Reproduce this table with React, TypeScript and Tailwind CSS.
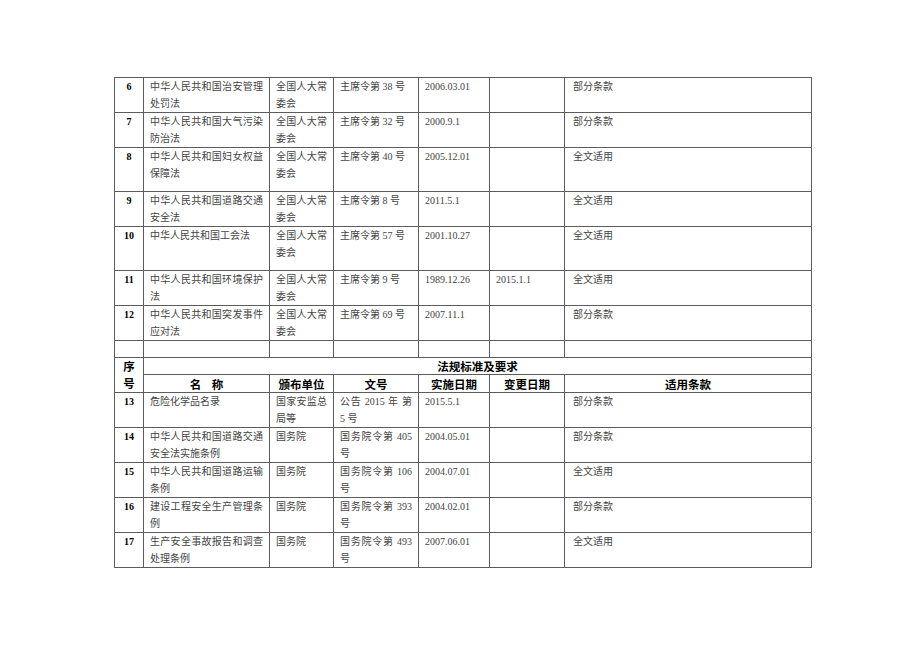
const body = '"Liberation Serif", "Noto Sans CJK SC", serif';
const head = '"Noto Sans CJK SC", "Liberation Sans", sans-serif';

type Row = {
  no: string;
  name: string[];
  issuer: string[];
  doc: string[];
  start: string;
  change: string;
  scope: string;
  h: string;
};

const partA: Row[] = [
  { no: "6", name: ["中华人民共和国治安管理", "处罚法"], issuer: ["全国人大常", "委会"], doc: ["主席令第 38 号"], start: "2006.03.01", change: "", scope: "部分条款", h: "h-[35px]" },
  { no: "7", name: ["中华人民共和国大气污染", "防治法"], issuer: ["全国人大常", "委会"], doc: ["主席令第 32 号"], start: "2000.9.1", change: "", scope: "部分条款", h: "h-[35px]" },
  { no: "8", name: ["中华人民共和国妇女权益", "保障法"], issuer: ["全国人大常", "委会"], doc: ["主席令第 40 号"], start: "2005.12.01", change: "", scope: "全文适用", h: "h-[44px]" },
  { no: "9", name: ["中华人民共和国道路交通", "安全法"], issuer: ["全国人大常", "委会"], doc: ["主席令第 8 号"], start: "2011.5.1", change: "", scope: "全文适用", h: "h-[35px]" },
  { no: "10", name: ["中华人民共和国工会法"], issuer: ["全国人大常", "委会"], doc: ["主席令第 57 号"], start: "2001.10.27", change: "", scope: "全文适用", h: "h-[44px]" },
  { no: "11", name: ["中华人民共和国环境保护", "法"], issuer: ["全国人大常", "委会"], doc: ["主席令第 9 号"], start: "1989.12.26", change: "2015.1.1", scope: "全文适用", h: "h-[35px]" },
  { no: "12", name: ["中华人民共和国突发事件", "应对法"], issuer: ["全国人大常", "委会"], doc: ["主席令第 69 号"], start: "2007.11.1", change: "", scope: "部分条款", h: "h-[35px]" },
];

const partB: Row[] = [
  { no: "13", name: ["危险化学品名录"], issuer: ["国家安监总", "局等"], doc: ["公告 2015 年 第", "5 号"], start: "2015.5.1", change: "", scope: "部分条款", h: "h-[35px]" },
  { no: "14", name: ["中华人民共和国道路交通", "安全法实施条例"], issuer: ["国务院"], doc: ["国务院令第 405", "号"], start: "2004.05.01", change: "", scope: "部分条款", h: "h-[35px]" },
  { no: "15", name: ["中华人民共和国道路运输", "条例"], issuer: ["国务院"], doc: ["国务院令第 106", "号"], start: "2004.07.01", change: "", scope: "全文适用", h: "h-[35px]" },
  { no: "16", name: ["建设工程安全生产管理条", "例"], issuer: ["国务院"], doc: ["国务院令第 393", "号"], start: "2004.02.01", change: "", scope: "部分条款", h: "h-[34px]" },
  { no: "17", name: ["生产安全事故报告和调查", "处理条例"], issuer: ["国务院"], doc: ["国务院令第 493", "号"], start: "2007.06.01", change: "", scope: "全文适用", h: "h-[35px]" },
];

const cell = "border border-[#5c5c5c] align-top px-[6px] p-0 text-left";

function Lines({ lines }: { lines: string[] }) {
  return (
    <>
      {lines.map((l, i) => (
        <div
          key={i}
          className={
            i < lines.length - 1
              ? "whitespace-nowrap text-justify [text-align-last:justify]"
              : "whitespace-nowrap"
          }
        >
          {l}
        </div>
      ))}
    </>
  );
}

function DataRow({ r }: { r: Row }) {
  return (
    <tr className={r.h}>
      <td className="border border-[#5c5c5c] align-top p-0 text-center font-bold text-black">{r.no}</td>
      <td className={cell}><Lines lines={r.name} /></td>
      <td className={cell}><Lines lines={r.issuer} /></td>
      <td className={cell}><Lines lines={r.doc} /></td>
      <td className={cell}>{r.start}</td>
      <td className={cell}>{r.change}</td>
      <td className={cell + " pl-[8px]"}>{r.scope}</td>
    </tr>
  );
}

export default function App() {
  const th = "border border-[#5c5c5c] p-0 text-center font-bold text-black";
  return (
    <div className="min-h-[651px] w-[920px] bg-white pl-[114px] pt-[77px]">
      <table
        className="w-[697px] table-fixed border-collapse text-[10px] leading-[17px] text-[#444]"
        style={{ fontFamily: body }}
      >
        <colgroup>
          <col className="w-[29px]" />
          <col className="w-[126px]" />
          <col className="w-[64px]" />
          <col className="w-[85px]" />
          <col className="w-[71px]" />
          <col className="w-[75px]" />
          <col className="w-[247px]" />
        </colgroup>
        <tbody>
          {partA.map((r) => (
            <DataRow key={r.no} r={r} />
          ))}
          <tr className="h-[17px]">
            {[0, 1, 2, 3, 4, 5, 6].map((i) => (
              <td key={i} className="border border-[#5c5c5c] p-0" />
            ))}
          </tr>
          <tr className="h-[17px] text-[11.5px] leading-[16px]" style={{ fontFamily: head }}>
            <td rowSpan={2} className={th + " leading-[17px]"}>
              <div>序</div>
              <div>号</div>
            </td>
            <td colSpan={6} className={th}>法规标准及要求</td>
          </tr>
          <tr className="h-[18px] text-[11.5px] leading-[16px]" style={{ fontFamily: head }}>
            <td className={th + " whitespace-pre"}>名    称</td>
            <td className={th}>颁布单位</td>
            <td className={th}>文号</td>
            <td className={th}>实施日期</td>
            <td className={th}>变更日期</td>
            <td className={th}>适用条款</td>
          </tr>
          {partB.map((r) => (
            <DataRow key={r.no} r={r} />
          ))}
        </tbody>
      </table>
    </div>
  );
}
